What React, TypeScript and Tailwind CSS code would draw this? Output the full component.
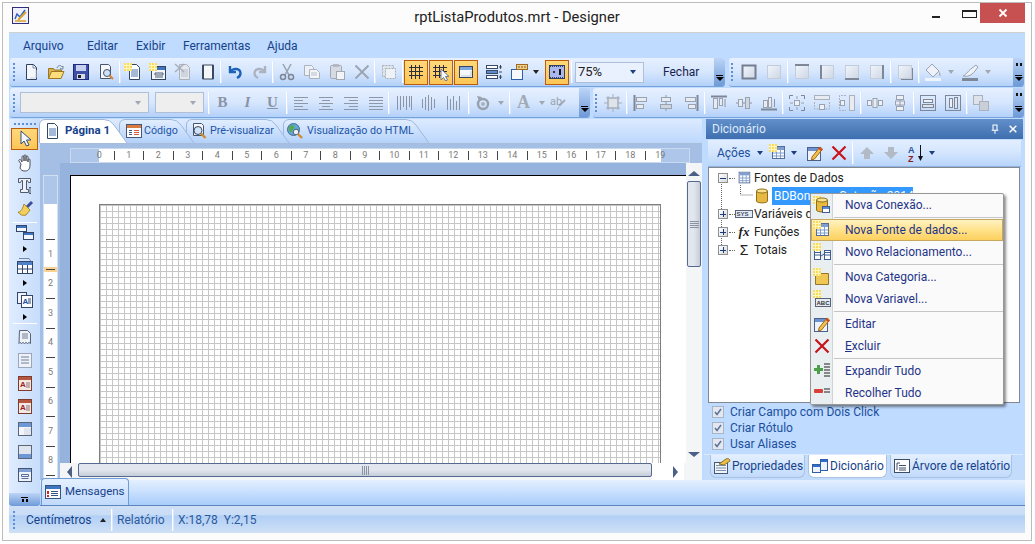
import React from "react";

const S = ({ children, s = 18 }: { children?: React.ReactNode; s?: number }) => (
  <svg width={s} height={s} viewBox="0 0 18 18" className="block shrink-0">{children}</svg>
);
const P = (d: string, c = "#8a94a6") => <S><path d={d} stroke={c} fill="none" /></S>;
const Star = ({ x = 0, y = 0 }: { x?: number; y?: number }) => (
  <g transform={`translate(${x} ${y})`}>
    <rect width="8" height="8" fill="#f8dc62" />
    <path d="M0 2.5h8M0 5.5h8M2.5 0v8M5.5 0v8" stroke="#fff6c0" />
  </g>
);
const Box = ({ t, r, b, l, all, shadow }: { t?: boolean; r?: boolean; b?: boolean; l?: boolean; all?: boolean; shadow?: boolean }) => (
  <S>
    <defs><linearGradient id="bx" x1="0" y1="0" x2="1" y2="1"><stop offset="0" stopColor="#f2f6fc" /><stop offset="1" stopColor="#cdd6e4" /></linearGradient></defs>
    {shadow && <path d="M5 17h12V5h-2v10H5z" fill="#7d8798" />}
    <rect x="2.5" y="2.5" width="13" height="13" fill="url(#bx)" stroke="#c3ccd9" />
    {all && <rect x="2.5" y="2.5" width="13" height="13" fill="none" stroke="#747e8f" strokeWidth="2" />}
    {t && <rect x="2" y="1" width="14" height="2" fill="#7d8798" />}
    {b && <rect x="2" y="15" width="14" height="2" fill="#7d8798" />}
    {l && <rect x="2" y="2" width="2" height="14" fill="#7d8798" />}
    {r && <rect x="14" y="2" width="2" height="14" fill="#7d8798" />}
  </S>
);
const Lines = ({ d = "M2 3.5h14M2 6.5h14M2 9.5h14M2 12.5h14M2 15.5h14" }: { d?: string }) => P(d, "#8d97a8");
const Page = ({ g }: { g?: boolean }) => (
  <>
    <path d="M5.5 1.5h7l3 3v12h-10z" fill={g ? "#e4e8ee" : "#fdfeff"} stroke={g ? "#a9b1be" : "#33465f"} />
    <path d="M7 7h7M7 9h7M7 11h7M7 13h7" stroke={g ? "#b9c0cb" : "#4a74b0"} />
  </>
);
const Sheet = ({ bot }: { bot?: boolean }) => (
  <S>
    <rect x="2.5" y="2.5" width="13" height="13" fill="#f4f6fa" stroke="#5b6678" />
    <path d={bot ? "M3 11h12v4H3z" : "M3 3h12v4H3z"} fill="#6d97d6" />
    <path d={bot ? "M3 3h12v8H3z" : "M8 8h7v7H8z"} fill="#dfe5ee" />
  </S>
);
const RedA = () => (
  <S>
    <rect x="2.5" y="2.5" width="13" height="14" fill="#f4e9e4" stroke="#7d3b2d" />
    <rect x="3" y="3" width="12" height="3" fill="#b5583f" />
    <text x="4" y="13" fontSize="8" fontWeight="700" fill="#a11d1d" fontFamily="Liberation Sans">A</text>
    <path d="M10 9h4M10 11h4M10 13h4" stroke="#8a7570" />
  </S>
);
const Folder = () => (
  <>
    <path d="M1.5 15.5v-10h5l1 1.5h7v2" fill="#d8b255" stroke="#9c7620" />
    <path d="M1.5 15.5l3-7h12.500l-3 7z" fill="#fbdd7c" stroke="#9c7620" />
  </>
);
const Cyl = () => (
  <S>
    <path d="M3.500 4v10c0 2.500 11 2.500 11 0V4" fill="#e7b93f" stroke="#8f6f1c" />
    <ellipse cx="9" cy="4" rx="5.500" ry="2" fill="#f8e28c" stroke="#8f6f1c" />
  </S>
);
const Tbl = () => (
  <>
    <rect x="3.500" y="2.500" width="12" height="12" fill="#fdfdff" stroke="#566d95" />
    <rect x="4" y="3" width="11" height="3" fill="#7e9fd0" />
    <path d="M4 9h11M4 12h11M7.500 6v8M11.500 6v8" stroke="#7e9fd0" />
  </>
);
const Pencil = () => (
  <S>
    <rect x="1.500" y="3.500" width="13" height="13" fill="#eef2fa" stroke="#4a5f8a" />
    <rect x="2" y="4" width="12" height="3" fill="#6c93cf" />
    <path d="M6 13L14 3l2.500 2L8.500 15l-3 1z" fill="#f4c24a" stroke="#a06a18" />
    <path d="M13 4l3 2.500" stroke="#d7402b" strokeWidth="2" />
  </S>
);
const RedX = () => <S><path d="M2.500 2.500l13 13M15.500 2.500l-13 13" stroke="#c8131b" strokeWidth="2.200" /></S>;

const ic: Record<string, React.ReactNode> = {
  newDoc: <S><path d="M4.500 1.500h7l3 3v12h-10z" fill="#f4f6fa" stroke="#2f4160" /><path d="M11 2v3h3" fill="none" stroke="#7b8aa1" /><path d="M8 15h6V7" stroke="#cbd3df" fill="none" /></S>,
  open: <S><Folder /><path d="M10 5c1-3 4-3 5-1l1-1v3h-3l1-1" stroke="#75859b" fill="none" /></S>,
  save: <S><rect x="1.500" y="1.500" width="15" height="15" fill="#3e4fa6" stroke="#1e2a7a" /><rect x="4" y="2" width="10" height="6" fill="#c6d0ef" /><rect x="5" y="11" width="8" height="5" fill="#d7dbe6" /><rect x="6" y="12" width="3" height="3" fill="#222" /></S>,
  prev: <S><path d="M3.500 1.500h8l2 2v12h-10z" fill="#f5f7fb" stroke="#45566f" /><circle cx="10" cy="10" r="3.500" fill="#cfe2f7" stroke="#44546b" /><path d="M12.500 12.500l3.500 3.500" stroke="#d9842b" strokeWidth="2" /></S>,
  newPage: <S><Page /><Star x={0} y={0} /></S>,
  newForm: <S><rect x="2.500" y="3.500" width="14" height="13" fill="#f4f6fb" stroke="#33465f" /><rect x="3" y="4" width="13" height="3" fill="#3f74c2" /><path d="M6 10h8v2H6zM6 14h8" stroke="#4a5a72" fill="none" /><Star /></S>,
  delPage: <S><Page g /><path d="M1 1l9 8M10 1l-9 8" stroke="#a6aeba" strokeWidth="1.500" /></S>,
  pageSz: <S><rect x="4" y="2" width="10" height="14" fill="#f4f6fa" stroke="#3c4a60" /><path d="M4 2v14M14 2v14" stroke="#3c4a60" strokeWidth="2" /></S>,
  undo: <S><path d="M4 3v6h6M4.500 9C7 4.500 14 5 14.500 10c.2 2.500-1.500 4-3.500 5" fill="none" stroke="#1e62b8" strokeWidth="2.400" /></S>,
  redo: <S><path d="M14 3v6H8M13.500 9C11 4.500 4 5 3.500 10c-.2 2.500 1.500 4 3.500 5" fill="none" stroke="#aab3bf" strokeWidth="2.400" /></S>,
  cut: <S><path d="M5 1l6 11M13 1L7 12" stroke="#98a1ae" strokeWidth="1.500" /><circle cx="5" cy="14" r="2.500" fill="none" stroke="#7d8696" strokeWidth="1.500" /><circle cx="13" cy="14" r="2.500" fill="none" stroke="#7d8696" strokeWidth="1.500" /></S>,
  copy: <S><path d="M1.500 2.500h7l2 2v8h-9z" fill="#eef1f5" stroke="#aab2bd" /><path d="M6.500 6.500h7l3 3v6h-10z" fill="#f2f4f8" stroke="#aab2bd" /><path d="M8 10h6M8 12h6" stroke="#b9c0ca" /></S>,
  paste: <S><rect x="2.500" y="2.500" width="11" height="13" rx="1" fill="#d6dbe3" stroke="#a0a8b4" /><rect x="5" y="1" width="6" height="3" fill="#b3bac5" /><rect x="8.500" y="8.500" width="8" height="8" fill="#f2f4f8" stroke="#a0a8b4" /></S>,
  xGray: <S><path d="M2.500 2.500l13 13M15.500 2.500l-13 13" stroke="#9aa3b0" strokeWidth="1.800" /></S>,
  select: <S><rect x="2.500" y="2.500" width="11" height="11" fill="#dfe4ea" stroke="#a9b1bd" strokeDasharray="2 1" /><rect x="5.500" y="5.500" width="10" height="10" fill="#eef1f5" stroke="#a9b1bd" strokeDasharray="2 1" /></S>,
  grid: P("M4.500 2v14M8.500 2v14M12.500 2v14M2 4.500h14M2 8.500h14M2 12.500h14", "#2c2c3a"),
  grid2: <S><path d="M3.500 2v13M7.500 2v13M11.500 2v9M1 4.500h14M1 8.500h14M1 12.500h8" stroke="#2c2c3a" fill="none" /><path d="M9 6v11l2.500-2.500 2 3.500 2-1-2-3.500H17z" fill="#f4f6fc" stroke="#6b7896" /></S>,
  win: <S><rect x="2.500" y="3.500" width="13" height="11" fill="#f4f7fc" stroke="#334560" /><rect x="3" y="4" width="12" height="3" fill="#7ea6e0" /><path d="M4 13h10V8" stroke="#c2cbd8" fill="none" /></S>,
  list: <S><rect x="1.500" y="2.500" width="11" height="3" fill="#fff" stroke="#3a4a63" /><rect x="1.500" y="7.500" width="11" height="3" fill="#5d8bd0" stroke="#3a4a63" /><rect x="1.500" y="12.500" width="11" height="3" fill="#fff" stroke="#3a4a63" /><path d="M14 4h3M14 9h3M14 14h3M15.500 2v4M15.500 12v4" stroke="#3a4a63" /></S>,
  winDrop: <S><rect x="1.500" y="6.500" width="11" height="10" fill="#f5f8fd" stroke="#2e5ea8" /><rect x="6.500" y="1.500" width="11" height="5" fill="#f2cf85" stroke="#9a6a24" /><path d="M8 4h8" stroke="#7a5a2a" strokeDasharray="2 1" /></S>,
  ruler: <S><rect x="1.500" y="2.500" width="15" height="13" fill="#aab8ef" stroke="#2f4160" /><path d="M2 3.500h14M2 14.500h14" stroke="#2f4160" strokeDasharray="1 1" /><rect x="11" y="6" width="2" height="6" fill="#111" /><rect x="5" y="8" width="2" height="2" fill="#333" /></S>,
  rotate: <S><circle cx="9" cy="10" r="5" fill="none" stroke="#98a1ae" strokeWidth="2.500" /><circle cx="9" cy="10" r="2" fill="#a9b1bd" /><path d="M3 2l5 1-3 4z" fill="#98a1ae" /></S>,
  ab: <S><path d="M11 12L17 6" stroke="#a5adba" strokeWidth="2" /><path d="M9 16l2-3" stroke="#a5adba" /></S>,
  alignL: Lines({ d: "M2 3.500h14M2 6.500h9M2 9.500h14M2 12.500h9M2 15.500h14" }),
  alignC: Lines({ d: "M2 3.500h14M5 6.500h8M2 9.500h14M5 12.500h8M2 15.500h14" }),
  alignR: Lines({ d: "M2 3.500h14M7 6.500h9M2 9.500h14M7 12.500h9M2 15.500h14" }),
  alignJ: Lines({}),
  bar1: P("M2.500 2v14M5.500 2v14M8.500 2v11M11.500 2v14M14.500 2v11M16.500 2v14"),
  bar2: P("M2.500 5v9M5.500 3v13M8.500 1v16M11.500 3v13M14.500 5v9"),
  bar3: P("M2.500 2v14M5.500 5v11M8.500 2v14M11.500 7v9M14.500 2v14"),
  fit: <S><rect x="4" y="4" width="10" height="10" fill="#dfe4ea" stroke="#a6aebb" /><path d="M9 0v4M9 14v4M0 9h4M14 9h4M2 4h14M2 14h14M4 2v14M14 2v14" stroke="#a6aebb" fill="none" /></S>,
  aL: <S><path d="M2.500 1v16" stroke="#7d8798" strokeWidth="2" /><rect x="4.500" y="3.500" width="10" height="4" fill="#e8ecf2" stroke="#98a2b1" /><rect x="4.500" y="10.500" width="7" height="4" fill="#e8ecf2" stroke="#98a2b1" /></S>,
  aC: <S><path d="M9 1v16" stroke="#8a94a6" /><rect x="4.500" y="3.500" width="9" height="4" fill="#e8ecf2" stroke="#98a2b1" /><rect x="3.500" y="10.500" width="11" height="4" fill="#cfd6e0" stroke="#98a2b1" /></S>,
  aR: <S><path d="M15.500 1v16" stroke="#7d8798" strokeWidth="2" /><rect x="3.500" y="3.500" width="10" height="4" fill="#e8ecf2" stroke="#98a2b1" /><rect x="6.500" y="10.500" width="7" height="4" fill="#e8ecf2" stroke="#98a2b1" /></S>,
  aT: <S><path d="M1 2.500h16" stroke="#7d8798" strokeWidth="2" /><rect x="3.500" y="4.500" width="4" height="10" fill="#e8ecf2" stroke="#98a2b1" /><rect x="9.500" y="4.500" width="3" height="7" fill="#e8ecf2" stroke="#98a2b1" /><path d="M15 13V5" stroke="#8a94a6" /></S>,
  aM: <S><path d="M1 9h16" stroke="#8a94a6" /><rect x="3.500" y="5.500" width="4" height="7" fill="#e8ecf2" stroke="#98a2b1" /><rect x="10.500" y="3.500" width="4" height="11" fill="#cfd6e0" stroke="#98a2b1" /></S>,
  aB: <S><path d="M1 15.500h16" stroke="#7d8798" strokeWidth="2" /><rect x="3.500" y="6.500" width="4" height="7" fill="#e8ecf2" stroke="#98a2b1" /><rect x="8.500" y="3.500" width="3" height="10" fill="#e8ecf2" stroke="#98a2b1" /><path d="M14.500 5v8" stroke="#8a94a6" /></S>,
  sz1: <S><path d="M1.500 5V1.500H5M13 1.500h3.500V5M1.500 13v3.500H5M13 16.500h3.500V13" stroke="#7d8798" fill="none" /><rect x="6.500" y="6.500" width="5" height="5" fill="#eef1f5" stroke="#98a2b1" /><path d="M9 2v3M9 13v3M2 9h3M13 9h3" stroke="#98a2b1" /></S>,
  sz2: <S><rect x="1.500" y="1.500" width="15" height="4" fill="#e8ecf2" stroke="#a9b1bd" /><path d="M1.500 8v7h15V8" stroke="#a9b1bd" strokeDasharray="2 1" fill="none" /><rect x="6.500" y="10.500" width="5" height="5" fill="#eef1f5" stroke="#98a2b1" /></S>,
  sz3: <S><rect x="11.500" y="1.500" width="5" height="15" fill="#e8ecf2" stroke="#a9b1bd" /><path d="M8 1.500H1.500v15H8" stroke="#a9b1bd" strokeDasharray="2 1" fill="none" /><rect x="2.500" y="6.500" width="4" height="5" fill="#eef1f5" stroke="#98a2b1" /></S>,
  dH: <S><rect x="1.500" y="6.500" width="4" height="5" fill="#eef1f5" stroke="#98a2b1" /><rect x="7" y="4.500" width="4" height="9" fill="#e8ecf2" stroke="#98a2b1" /><rect x="12.500" y="6.500" width="4" height="5" fill="#eef1f5" stroke="#98a2b1" /></S>,
  dV: <S><rect x="5.500" y="1.500" width="7" height="4" fill="#eef1f5" stroke="#98a2b1" /><rect x="4.500" y="7" width="9" height="4" fill="#e8ecf2" stroke="#98a2b1" /><rect x="5.500" y="12.500" width="7" height="4" fill="#eef1f5" stroke="#98a2b1" /><path d="M9 5v8" stroke="#98a2b1" /></S>,
  cH: <S><rect x="1.500" y="1.500" width="15" height="15" fill="none" stroke="#7d8798" /><rect x="4.500" y="5.500" width="9" height="3" fill="#eef1f5" stroke="#7d8798" /><rect x="3.500" y="10.500" width="11" height="3" fill="#dfe4ea" stroke="#7d8798" /></S>,
  cV: <S><rect x="1.500" y="1.500" width="15" height="15" fill="none" stroke="#7d8798" /><rect x="5.500" y="4.500" width="3" height="9" fill="#eef1f5" stroke="#7d8798" /><rect x="10.500" y="3.500" width="3" height="11" fill="#dfe4ea" stroke="#7d8798" /></S>,
  order: <S><rect x="1.500" y="1.500" width="9" height="9" fill="#dfe3e9" stroke="#a9b1bd" /><rect x="7.500" y="7.500" width="9" height="9" fill="#c9cfd8" stroke="#a9b1bd" /></S>,
  paint: <S><path d="M8 1l7 7-6 6-7-7z" fill="#eef1f5" stroke="#9aa3b0" /><path d="M15 8c2 3 2 5 1 5s-1-2-1-5z" fill="#a9b1bd" /><rect x="1" y="15" width="16" height="3" fill="#eef4fd" /></S>,
  pen: <S><path d="M2 13c3-1 4-4 9-8l4-3 2 2-3 4c-4 5-8 6-12 5z" fill="#eef1f5" stroke="#9aa3b0" /><rect x="1" y="15" width="16" height="3" fill="#7d8798" /></S>,
  pointer: <S><path d="M5 1v13l3-3 2.500 5 2.500-1-2.500-5H15z" fill="#f4f7fc" stroke="#364e7a" /></S>,
  hand: <S><path d="M5 10L3 7c-1-1 1-2 2-1l1 2V3c0-1.500 2-1.500 2 0v4-5c0-1.500 2-1.500 2 0v5-4c0-1.500 2-1.500 2 0v5-2c0-1.500 2-1.500 2 0v5c0 3-1 6-5 6-3 0-4-1-5-3z" fill="#fff" stroke="#4a4f5a" /></S>,
  textT: <S><path d="M2.500 1.500h12v4h-2l-1-2h-1v9h2v3h-8v-3h2v-9h-1l-1 2h-2z" fill="#eef2f8" stroke="#4e5a6b" /><path d="M14 11v5M13 10.500h2M13 16.500h2" stroke="#4e5a6b" /></S>,
  brush: <S><path d="M11 7l5-5" stroke="#3f4f96" strokeWidth="3" /><path d="M8 4l6 6-4 5c-3 1-6 0-8-3 2 0 4-1 6-8z" fill="#f2cf5c" stroke="#a68a2c" /></S>,
  bands: <S><rect x="0.500" y="2.500" width="10" height="6" fill="#f4f7fc" stroke="#33456a" /><rect x="1" y="3" width="9" height="2" fill="#3f74c2" /><rect x="7.500" y="9.500" width="10" height="7" fill="#f4f7fc" stroke="#33456a" /><rect x="8" y="10" width="9" height="2" fill="#3f74c2" /></S>,
  table: <S><rect x="1.500" y="4.500" width="15" height="12" fill="#fbfdff" stroke="#33456a" /><rect x="2" y="5" width="14" height="3" fill="#4f80c8" /><path d="M2 12h14M6.500 8v8M11.500 8v8" stroke="#33456a" /><path d="M3 1.500h10l2 3" stroke="#6e86ad" fill="none" /></S>,
  docA: <S><rect x="1.500" y="1.500" width="9" height="11" fill="#eef2fa" stroke="#33456a" /><rect x="5.500" y="4.500" width="11" height="12" fill="#fbfcff" stroke="#33456a" /><text x="6.500" y="13" fontSize="8" fontWeight="700" fill="#1e4fa8" fontFamily="Liberation Sans">A</text><path d="M12 8h3M12 10h3M12 12h3" stroke="#33456a" /></S>,
  zig: <S><path d="M3.500 2.500h8l3 3v10l-1.500-1-1.500 1-1.500-1-1.500 1-1.500-1-1.500 1-1.500-1-1 1z" fill="#eef1f6" stroke="#56627a" /><path d="M6 6h6M6 8h6M6 10h6" stroke="#6f809a" /></S>,
  zig2: <S><rect x="2.500" y="2.500" width="13" height="14" fill="#eef1f7" stroke="#56627a" strokeDasharray="1 1" /><path d="M5 6h8M5 9h8M5 12h8" stroke="#6f809a" /></S>,
  redA: <RedA />,
  sheetT: <Sheet />,
  sheetB: <Sheet bot />,
  form: <S><rect x="2.500" y="2.500" width="13" height="13" fill="#eef2fa" stroke="#45556f" /><rect x="3" y="3" width="12" height="3" fill="#7ea0d4" /><path d="M5.500 8.500h7v2h-7zM5.500 12.500h7" stroke="#5a6f96" fill="none" /></S>,
  msg: <S><rect x="1.500" y="2.500" width="15" height="13" fill="#fdfdff" stroke="#33557f" /><rect x="2" y="3" width="14" height="3" fill="#3f74c2" /><path d="M7 8.500h7M7 10.500h7M7 12.500h7" stroke="#33557f" /><path d="M4 8v3" stroke="#d8261d" strokeWidth="2" /><path d="M4 12v2" stroke="#d8261d" strokeWidth="2" /></S>,
  codeT: <S><rect x="1.500" y="2.500" width="15" height="13" fill="#fdfdff" stroke="#45587a" /><rect x="2" y="3" width="14" height="3" fill="#d97a3f" /><path d="M4 8.500h3M4 10.500h3M4 12.500h3" stroke="#45587a" /><path d="M9 8.500h5M9 10.500h5M9 12.500h5" stroke="#d15b3b" /></S>,
  pageT: <S><Page /></S>,
  preview: <S><path d="M3.500 1.500h8l2 2v10h-10z" fill="#f5f7fb" stroke="#45566f" /><circle cx="8" cy="8.500" r="4" fill="#cfe2f7" stroke="#3c4b60" /><path d="M11 11.500l4.500 4.500" stroke="#d28a2e" strokeWidth="2.400" /></S>,
  globe: <S><circle cx="7.500" cy="7.500" r="6" fill="#5da9d8" stroke="#476a8c" /><path d="M3 5c2-2 4-3 5-1s-1 3-2 5-2 1-3-1zM9 9c2-1 4 0 3 2l-2 1z" fill="#57ab4a" /><circle cx="10" cy="10" r="2.800" fill="#e9f2fb" stroke="#53606f" /><path d="M12 12l4 4" stroke="#d28a2e" strokeWidth="2.400" /></S>,
  actNew: <S><Tbl /><Star /></S>,
  dn: <S><path d="M6 3h6v5h4l-7 7-7-7h4z" fill="#b2bac6" /></S>,
  up: <S><path d="M6 15h6v-5h4L9 3l-7 7h4z" fill="#b2bac6" /></S>,
  az: <S><text x="1" y="8.500" fontSize="9" fontWeight="700" fill="#2a4f9c" fontFamily="Liberation Sans">A</text><text x="1" y="17.500" fontSize="9" fontWeight="700" fill="#8a1c1c" fontFamily="Liberation Sans">Z</text><path d="M13.500 1v12" stroke="#111" /><path d="M11 12h5l-2.500 5z" fill="#111" /></S>,
  pencil: <Pencil />,
  redX: <RedX />,
  pin: <S s={12}><path d="M6 3h6v8h-6zM4 11h10M9 11v5" stroke="#fff" fill="none" strokeWidth="1.600" /></S>,
  close: <S s={12}><path d="M4 4l10 10M14 4L4 14" stroke="#fff" strokeWidth="2.200" /></S>,
  tblI: <S s={16}><Tbl /></S>,
  cyl: <Cyl />,
  sys: <S><rect x="0.500" y="5.500" width="17" height="7" fill="#e6ebf3" stroke="#59647a" /><text x="1.500" y="11" fontSize="6" fontWeight="700" fill="#3e4c66" fontFamily="Liberation Sans">SYS</text></S>,
  mConn: <S><Star /><Cyl /><rect x="9.500" y="10.500" width="7" height="6" fill="#fff" stroke="#3f5c8e" /><rect x="10" y="11" width="6" height="2" fill="#5d8bd0" /></S>,
  mFonte: <S><Tbl /><Star /></S>,
  mRel: <S><rect x="1.500" y="7.500" width="6" height="9" fill="#fff" stroke="#3f5c8e" /><rect x="11.500" y="7.500" width="6" height="9" fill="#fff" stroke="#3f5c8e" /><path d="M2 9.500h5M12 9.500h5M2 12h5M12 12h5M8 13l3-2" stroke="#3f5c8e" /><Star /></S>,
  mCat: <S><path d="M2.500 16.500v-11h13v11z" fill="#efc754" stroke="#97762a" /><path d="M2.500 5.500h6" stroke="#97762a" /><Star /></S>,
  mVar: <S><rect x="2.500" y="8.500" width="15" height="8" fill="#e6ebf3" stroke="#59647a" /><text x="3.500" y="15" fontSize="6" fontWeight="700" fill="#333" fontFamily="Liberation Sans">ABC</text><Star /></S>,
  mExp: <S><path d="M1 6h3V3h3v3h3v3H7v3H4V9H1z" fill="#4ca04a" /><path d="M11 2h6M11 5h6M11 8h6M11 11h6M11 14h6" stroke="#222" /></S>,
  mCol: <S><rect x="1" y="5" width="9" height="4" rx="1" fill="#d9403a" /><path d="M11 5h6M11 8h6" stroke="#222" /></S>,
  prop: <S><rect x="1.500" y="5.500" width="13" height="11" fill="#f1f4f9" stroke="#47597a" /><path d="M3 8.500h10M3 11h10M3 13.500h10" stroke="#7b8eaa" /><path d="M6 7L13 2c2-1 4 0 4 2l-6 4z" fill="#eac04a" stroke="#8f7226" /></S>,
  dict: <S><rect x="1.500" y="7.500" width="8" height="8" fill="#eef4fd" stroke="#2f5ea8" /><rect x="2" y="8" width="7" height="2" fill="#2f6fc7" /><rect x="9.500" y="2.500" width="7" height="11" fill="#eef4fd" stroke="#2f5ea8" /><rect x="10" y="3" width="6" height="2" fill="#2f6fc7" /></S>,
  tree: <S><rect x="1.500" y="2.500" width="15" height="13" fill="#fdfdff" stroke="#3e4e66" /><path d="M4 6h3M6 8.500h7M6 11h7M6 13h7M4 6v7" stroke="#3e4e66" /></S>,
};

const Btn = ({ i, active, className = "" }: { i: string; active?: boolean; className?: string }) => (
  <div className={`w-[25px] h-[25px] shrink-0 flex items-center justify-center ${className}`}>
    {active ? (
      <div className="w-[24px] h-[25px] -ml-px flex items-center justify-center border border-[#bd5b0c] bg-gradient-to-b from-[#ffd87a] to-[#fdc655]">{ic[i]}</div>
    ) : ic[i]}
  </div>
);
const Tx = ({ c, className = "" }: { c: string; className?: string }) => (
  <div className={`w-[25px] h-[25px] shrink-0 flex items-center justify-center font-['Liberation_Serif',serif] font-bold text-[15px] text-[#8a94a6] ${className}`}>{c}</div>
);
const Sep = ({ className = "" }: { className?: string }) => <div className={`w-[2px] h-[22px] shrink-0 border-l border-white bg-[#dbe8fb] ${className}`} />;
const Arrow = ({ className = "", c = "border-t-[#a0a8b4]" }: { className?: string; c?: string }) => (
  <div className={`w-[12px] shrink-0 flex justify-center ${className}`}>
    <div className={`w-0 h-0 border-x-[3.5px] border-x-transparent border-t-[4px] ${c}`} />
  </div>
);
const Grip = ({ className = "" }: { className?: string }) => (
  <div className={`flex flex-col gap-[2px] shrink-0 ${className}`}>
    {[0, 1, 2, 3, 4].map((k) => <div key={k} className="w-[2px] h-[2px] bg-[#5c8fd6]" />)}
  </div>
);
const Chevron = ({ dbl }: { dbl?: boolean }) => (
  <div className="ml-auto w-[11px] self-stretch shrink-0 rounded-r-[3px] bg-gradient-to-b from-[#bcd4f6] to-[#6e9ad8] flex flex-col items-center justify-end pb-[5px]">
    {dbl && <div className="mb-auto mt-[5px] text-[0px] flex gap-[2px]"><div className="w-[2px] h-[3px] bg-[#111]" /><div className="w-[2px] h-[3px] bg-[#111]" /></div>}
    <div className="w-[7px] h-[1px] bg-black mb-[1px]" />
    <div className="w-0 h-0 border-x-[4px] border-x-transparent border-t-[4px] border-t-black" />
  </div>
);
const Bar = ({ children, className = "" }: { children: React.ReactNode; className?: string }) => (
  <div className={`flex items-center rounded-[3px] bg-gradient-to-b from-[#e6f0ff] via-[#d6e6fd] to-[#b4d1fa] border-b border-[#74a2db] ${className}`}>{children}</div>
);
const Combo = ({ className = "", text }: { className?: string; text?: string }) => (
  <div className={`h-[21px] shrink-0 border border-[#aebfd6] flex items-center justify-end pr-[7px] ${className}`}>
    {text && <span className="mr-auto ml-[2px] text-[13px] text-[#222]">{text}</span>}
    <div className={`w-0 h-0 border-x-[3.5px] border-x-transparent border-t-[4px] ${text ? "border-t-[#1c3f80]" : "border-t-[#a0a8b4]"}`} />
  </div>
);

const Tab = ({ w, cls, icon, label, active, tcls = "" }: { w: number; cls: string; icon: string; label: string; active?: boolean; tcls?: string }) => (
  <div className={`relative h-[24px] flex items-center shrink-0 ${cls}`}>
    <svg className="absolute inset-0" width={w} height={24} viewBox={`0 0 ${w} 24`}>
      <defs>
        <linearGradient id="tg" x1="0" y1="0" x2="0" y2="1"><stop offset="0" stopColor="#e2eeff" /><stop offset="1" stopColor="#b4d1fa" /></linearGradient>
      </defs>
      <path d={`M0.500 24V6Q0.500 1 6 0.500H${w - 24}Q${w - 18} 0.500 ${w - 14} 6L${w - 1} 24`} fill={active ? "#ffffff" : "url(#tg)"} stroke="#9db8dc" />
    </svg>
    <div className="relative flex items-center pl-[3px]">
      {ic[icon]}
      <span className={`whitespace-nowrap ${tcls} ${active ? "text-[11.500px] font-bold text-[#15428b]" : "text-[10.700px] text-[#1b55a8]"}`}>{label}</span>
    </div>
  </div>
);

const HCell = ({ n }: { n: number }) => (
  <div className="w-[29.500px] shrink-0 flex items-center">
    <span className="flex-1 text-center text-[9px] leading-none text-[#7a7a7a]">{n}</span>
    {n < 19 && <div className="w-[1px] h-[9px] bg-[#444]" />}
  </div>
);
const VCell = ({ n }: { n: number }) => (
  <div className="relative h-[29.500px] shrink-0 flex flex-col items-center">
    {n === 2 && <div className="absolute left-0 right-0 top-[-2px] h-[5px] bg-[#fbd28f]" />}
    <div className="relative w-[9px] h-[1px] bg-[#444] shrink-0" />
    <span className="flex-1 flex items-center text-[9px] leading-none text-[#7a7a7a]">{n}</span>
  </div>
);

const Check = ({ label }: { label: string }) => (
  <div className="h-[16px] flex items-center pl-[6px] text-[12px] text-[#1b4f9c]">
    <div className="w-[12px] h-[12px] border border-[#a6b5c9] bg-[#e3e8ee] flex items-center justify-center mr-[6px]">
      <svg width="10" height="10" viewBox="0 0 10 10"><path d="M2 5l2 2.500L8 2" stroke="#5d7199" strokeWidth="1.500" fill="none" /></svg>
    </div>
    {label}
  </div>
);
const Exp = ({ minus }: { minus?: boolean }) => (
  <div className="relative w-[10px] h-[10px] shrink-0 border border-[#8e8f8f] bg-gradient-to-br from-white to-[#d5d9df] flex items-center justify-center">
    <div className="w-[6px] h-[1px] bg-[#1c3d78]" />
    {!minus && <div className="absolute w-[1px] h-[6px] bg-[#1c3d78]" />}
  </div>
);
const TreeRow = ({ icon, label, minus }: { icon: React.ReactNode; label: string; minus?: boolean }) => (
  <div className="h-[18px] flex items-center pl-[9px]">
    <Exp minus={minus} />
    <div className="w-[6px] ml-px border-t border-dotted border-[#666] mr-px" />
    <div className="w-[16px] flex justify-center">{icon}</div>
    <span className="ml-[2px] text-[12px] text-[#222] whitespace-nowrap">{label}</span>
  </div>
);

const MItem = ({ icon, children, hi }: { icon: string; children: React.ReactNode; hi?: boolean }) => (
  <div className={`relative h-[22px] flex items-center ${hi ? "bg-gradient-to-b from-[#fff4c6] via-[#ffe28a] to-[#fccf58] outline outline-1 outline-[#c8a85e] -outline-offset-1" : ""}`}>
    <div className={`w-[22px] h-full shrink-0 flex items-center justify-center ${hi ? "" : "bg-[#e9eef0] border-r border-[#cdd3d7]"}`}>{ic[icon]}</div>
    <span className="pl-[12px] text-[12px] text-[#1f3488] whitespace-nowrap">{children}</span>
  </div>
);
const MSep = () => (
  <div className="h-[3px] flex">
    <div className="w-[22px] bg-[#e9eef0] border-r border-[#cdd3d7]" />
    <div className="flex-1 ml-px mt-px h-[1px] bg-[#c5c5c5]" />
  </div>
);
const BTab = ({ icon, label, cls, active }: { icon: string; label: string; cls: string; active?: boolean }) => (
  <div className={`h-[23px] flex items-center gap-[1px] pl-[2px] rounded-b-[6px] border border-t-0 border-[#a9c2e4] text-[12px] text-[#15428b] whitespace-nowrap ${active ? "bg-white" : "bg-gradient-to-b from-[#e3efff] to-[#c2dafb]"} ${cls}`}>
    {ic[icon]}
    {label}
  </div>
);

export default function App() {
  return (
    <div className="relative w-[1035px] h-[544px] overflow-hidden bg-white font-['Roboto','Open_Sans',sans-serif]">
      <div className="ml-[2px] mt-[2px] w-[1030px] h-[539px] border border-[#bcbcbc] bg-[#fcfcfc] flex flex-col">
        {/* title bar */}
        <div className="h-[29px] shrink-0 grid grid-cols-[1fr_auto_1fr]">
          <div className="pl-[9px] pt-[4px]">
            <svg width="17" height="17" viewBox="0 0 17 17" className="block">
              <rect x="0.500" y="0.500" width="16" height="16" fill="#eef0fb" stroke="#2f2f7a" />
              <path d="M3 12l2-5 3 3 5-7" stroke="#2f5fc0" fill="none" strokeWidth="1.500" />
              <path d="M6 13L14 5" stroke="#d9a32b" strokeWidth="2" />
              <path d="M3 14h11" stroke="#d9a32b" strokeWidth="1.500" />
            </svg>
          </div>
          <div className="pt-[3px] text-[14.700px] leading-[22px] text-[#222]">rptListaProdutos.mrt - Designer</div>
          <div className="flex justify-end pr-[6px]">
            <div className="w-[8px] h-[2px] bg-[#222] mt-[13px] mr-[22px]" />
            <div className="w-[15px] h-[8px] border border-t-2 border-[#222] mt-[7px] mr-[3px]" />
            <div className="w-[45px] h-[20px] bg-[#c75050] flex items-center justify-center">
              <svg width="10" height="10" viewBox="0 0 10 10"><path d="M1.500 1.500l7 7M8.500 1.500l-7 7" stroke="#fff" strokeWidth="1.800" /></svg>
            </div>
          </div>
        </div>

        {/* client */}
        <div className="ml-[6px] mr-[6px] mb-[7px] flex-1 flex flex-col bg-[#bfdbff] border-t border-[#cfcfcf] min-h-0">
          {/* menu */}
          <div className="h-[25px] shrink-0 flex items-center pl-[14px] text-[12px] text-[#15428b]">
            <span className="w-[64px]">Arquivo</span><span className="w-[49px]">Editar</span><span className="w-[47px]">Exibir</span><span className="w-[84px]">Ferramentas</span><span>Ajuda</span>
          </div>
          {/* toolbar row 1 */}
          <div className="h-[30px] shrink-0 flex pl-[1px] pr-[1px] pb-[1px]">
            <Bar className="w-[715px] pl-[3px]">
              <Grip className="mr-[3px]" />
              <Btn i="newDoc" /><Btn i="open" /><Btn i="save" /><Btn i="prev" />
              <Sep className="ml-[1px] -mr-[1px]" />
              <Btn i="newPage" /><Btn i="newForm" /><Btn i="delPage" /><Btn i="pageSz" />
              <Sep />
              <Btn i="undo" /><Btn i="redo" />
              <Sep />
              <Btn i="cut" /><Btn i="copy" /><Btn i="paste" /><Btn i="xGray" />
              <Sep />
              <Btn i="select" />
              <Sep className="ml-[1px]" />
              <Btn i="grid" active /><Btn i="grid2" active /><Btn i="win" active />
              <Btn i="list" className="ml-[2px]" />
              <Btn i="winDrop" />
              <Arrow c="border-t-[#222]" className="-ml-[1px] w-[9px]" />
              <Btn i="ruler" active className="ml-[3px]" />
              <Sep className="ml-[1px]" />
              <Combo text="75%" className="ml-[2px] w-[69px] bg-[#e9f1fe]" />
              <span className="ml-[19px] text-[12px] text-[#1b1f4e]">Fechar</span>
              <Chevron />
            </Bar>
            <Bar className="flex-1 ml-[4px] pl-[2px]">
              <Grip className="mr-[3px]" />
              <div className="w-[25px] flex justify-center"><Box all /></div>
              <div className="w-[25px] flex justify-center"><Box /></div>
              <Sep className="ml-[1px]" />
              <div className="w-[25px] flex justify-center"><Box t /></div>
              <div className="w-[25px] flex justify-center"><Box l /></div>
              <div className="w-[25px] flex justify-center"><Box b /></div>
              <div className="w-[25px] flex justify-center"><Box r /></div>
              <Sep className="ml-[1px]" />
              <div className="w-[25px] flex justify-center"><Box shadow /></div>
              <Sep className="ml-[1px]" />
              <Btn i="paint" /><Arrow />
              <Btn i="pen" /><Arrow />
              <Chevron dbl />
            </Bar>
          </div>
          {/* toolbar row 2 */}
          <div className="h-[31px] shrink-0 flex pl-[1px] pr-[1px] pb-[1px]">
            <Bar className="w-[580px] pl-[3px]">
              <Grip className="mr-[5px]" />
              <Combo className="w-[129px] bg-[#eeeeee]" />
              <Combo className="ml-[6px] w-[49px] bg-[#eeeeee]" />
              <Sep className="ml-[4px]" />
              <Tx c="B" /><Tx c="I" className="italic" /><Tx c="U" className="underline" />
              <Sep className="ml-[1px]" />
              <Btn i="alignL" /><Btn i="alignC" /><Btn i="alignR" /><Btn i="alignJ" />
              <Sep />
              <Btn i="bar1" className="ml-[1px]" /><Btn i="bar2" /><Btn i="bar3" />
              <Sep className="ml-[2px]" />
              <Btn i="rotate" /><Arrow />
              <Sep className="ml-[2px]" />
              <Tx c="A" className="text-[18px] text-[#a2aab6]" /><Arrow />
              <div className="relative w-[25px] h-[18px] flex items-center text-[11px] leading-none text-[#9aa3b0]">
                <span className="absolute left-[2px] top-[2px]">ab</span>
                {ic.ab}
              </div>
              <Chevron />
            </Bar>
            <Bar className="flex-1 ml-[3px] pl-[2px]">
              <Grip className="mr-[3px]" />
              <Btn i="fit" />
              <Sep className="ml-[1px]" />
              <Btn i="aL" /><Btn i="aC" /><Btn i="aR" />
              <Sep className="ml-[1px]" />
              <Btn i="aT" /><Btn i="aM" /><Btn i="aB" />
              <Sep className="ml-[1px]" />
              <Btn i="sz1" /><Btn i="sz2" /><Btn i="sz3" />
              <Sep className="ml-[1px]" />
              <Btn i="dH" /><Btn i="dV" />
              <Sep className="ml-[1px]" />
              <Btn i="cH" /><Btn i="cV" />
              <Sep className="ml-[1px]" />
              <Btn i="order" />
              <Chevron dbl />
            </Bar>
          </div>

          {/* main */}
          <div className="flex-1 flex min-h-0">
            {/* left strip */}
            <div className="w-[31px] shrink-0 flex flex-col items-center bg-gradient-to-r from-[#dfecff] to-[#c7ddfb]">
              <div className="h-[9px] w-full flex items-center justify-center gap-[2px] shrink-0">
                {[0, 1, 2, 3, 4, 5].map((k) => <div key={k} className="w-[2px] h-[2px] bg-[#5c8fd6]" />)}
              </div>
              <div className="w-[27px] h-[22px] shrink-0 border border-[#bd5b0c] bg-gradient-to-b from-[#ffd87a] to-[#fdc655] flex items-center justify-center">{ic.pointer}</div>
              <div className="mt-[1px] h-[23px] flex items-center">{ic.hand}</div>
              <div className="h-[23px] flex items-center">{ic.textT}</div>
              <div className="h-[23px] flex items-center">{ic.brush}</div>
              <div className="w-[24px] h-[1px] bg-white mt-[2px]" />
              {["bands", "table", "docA"].map((k) => (
                <React.Fragment key={k}>
                  <div className="h-[18px] flex items-center">{ic[k]}</div>
                  <div className="h-[16px] flex items-center"><div className="w-0 h-0 border-y-[3.500px] border-y-transparent border-l-[4px] border-l-black" /></div>
                </React.Fragment>
              ))}
              <div className="w-[24px] h-[1px] bg-white -mt-[2px] mb-[1px]" />
              {["zig", "zig2", "redA", "redA", "sheetT", "sheetB", "form"].map((k, n) => (
                <div key={n} className="h-[23px] flex items-center">{ic[k]}</div>
              ))}
              <div className="mt-auto w-full h-[13px] rounded-b-[3px] bg-gradient-to-b from-[#bcd4f6] to-[#6e9ad8] flex flex-col items-center justify-center gap-[1px]">
                <div className="w-[7px] h-[1px] bg-black" />
                <div className="flex gap-[2px]"><div className="w-[2px] h-[3px] bg-black" /><div className="w-[2px] h-[3px] bg-black" /></div>
              </div>
            </div>

            <div className="flex-1 flex flex-col min-w-0">
              <div className="h-[361px] shrink-0 flex">
                {/* center */}
                <div className="w-[662px] shrink-0 flex flex-col">
                  <div className="h-[25px] shrink-0 flex items-end bg-gradient-to-b from-[#dceafe] to-[#bdd8fd] border-b border-[#a6bddc]">
                    <Tab w={89} cls="w-[89px] -ml-px z-40" icon="pageT" label="Página 1" active tcls="ml-[5px]" />
                    <Tab w={76} cls="w-[76px] -ml-[9px] pl-[3px] z-30" icon="codeT" label="Código" tcls="ml-[1px]" />
                    <Tab w={104} cls="w-[104px] -ml-[9px] z-20 pl-[1px]" icon="preview" label="Pré-visualizar" tcls="ml-[2px]" />
                    <Tab w={147} cls="w-[147px] -ml-[7px] z-10" icon="globe" label="Visualização do HTML" tcls="ml-[3px]" />
                  </div>
                  <div className="flex-1 flex flex-col bg-[#a4bee4] min-h-0">
                    <div className="h-[19px] shrink-0 pt-[4px] pl-[30px]">
                      <div className="w-[620px] h-[15px] border border-[#c9d9f0] flex overflow-hidden bg-[linear-gradient(90deg,#adc6ea_28px,#ffffff_28px,#ffffff_590px,#adc6ea_590px)] pl-[14px]">
                        {Array.from({ length: 20 }, (_, n) => <HCell key={n} n={n} />)}
                      </div>
                    </div>
                    <div className="flex-1 flex min-h-0">
                      <div className="w-[20px] shrink-0 pl-[3px] pt-[12px] flex">
                        <div className="w-[15px] border border-b-0 border-[#d2e0f4] overflow-hidden flex flex-col bg-[linear-gradient(180deg,#adc6ea_28px,#ffffff_28px)]">
                          <div className="h-[63px] shrink-0" />
                          {[1, 2, 3, 4, 5, 6, 7, 8, 9].map((n) => <VCell key={n} n={n} />)}
                        </div>
                      </div>
                      <div className="flex-1 flex flex-col min-w-0">
                        <div className="h-[300px] shrink-0 flex">
                          <div className="w-[626px] shrink-0 bg-[#95b3dd] pt-[12px] pl-[10px] flex overflow-hidden">
                            <div className="flex-1 bg-white border-l border-t border-black pl-[28px] pt-[28px] flex">
                              <div className="w-[562px] border border-b-0 border-[#7f7f7f] bg-white bg-[linear-gradient(#c6c6c6_1px,transparent_1px),linear-gradient(90deg,#c6c6c6_1px,transparent_1px)] bg-[size:6px_6px]" />
                            </div>
                          </div>
                          {/* v scrollbar */}
                          <div className="w-[16px] shrink-0 bg-[#f4f5f7] flex flex-col items-center pt-[2px]">
                            <div className="h-[16px] flex items-center"><div className="w-0 h-0 border-x-[6px] border-x-transparent border-b-[5px] border-b-[#4c5f86]" /></div>
                            <div className="w-[14px] h-[86px] rounded-[2px] border border-[#56698f] bg-gradient-to-r from-[#e2e6ee] via-[#e2e6ee] to-[#c5cdd9] flex flex-col items-center justify-center gap-[1px] shrink-0">
                              <div className="w-[9px] h-[1px] bg-[#8a93a3]" /><div className="w-[9px] h-[1px] bg-[#8a93a3]" /><div className="w-[9px] h-[1px] bg-[#8a93a3]" /><div className="w-[9px] h-[1px] bg-[#8a93a3]" />
                            </div>
                            <div className="mt-auto mb-[6px] w-0 h-0 border-x-[6px] border-x-transparent border-t-[5px] border-t-[#4c5f86]" />
                          </div>
                        </div>
                        {/* h scrollbar */}
                        <div className="flex-1 flex items-stretch bg-[#f4f5f7]">
                          <div className="w-[18px] shrink-0 flex items-center justify-center"><div className="w-0 h-0 border-y-[6px] border-y-transparent border-r-[5px] border-r-[#4c5f86]" /></div>
                          <div className="w-[574px] h-[14px] rounded-[2px] border border-[#56698f] bg-gradient-to-b from-[#e2e6ee] via-[#e2e6ee] to-[#c5cdd9] flex items-center justify-center gap-[1px] shrink-0">
                            <div className="w-[1px] h-[9px] bg-[#8a93a3]" /><div className="w-[1px] h-[9px] bg-[#8a93a3]" /><div className="w-[1px] h-[9px] bg-[#8a93a3]" /><div className="w-[1px] h-[9px] bg-[#8a93a3]" />
                          </div>
                          <div className="w-[32px] shrink-0 bg-white flex items-center justify-center pl-[14px]"><div className="w-0 h-0 border-y-[6px] border-y-transparent border-l-[5px] border-l-[#4c5f86]" /></div>
                        </div>
                      </div>
                    </div>
                  </div>
                </div>

                {/* right panel */}
                <div className="flex-1 flex flex-col pl-[4px] pr-[2px] min-w-0">
                  <div className="h-[20px] shrink-0 flex items-center pl-[6px] pr-[4px] bg-gradient-to-b from-[#628fca] to-[#3e6fae] text-[12px] text-[#dfeafa]">
                    <span>Dicionário</span>
                    <div className="ml-auto mr-[6px]">{ic.pin}</div>
                    {ic.close}
                  </div>
                  <div className="mx-[2px] mt-[1px] h-[27px] shrink-0 flex items-center pl-[9px] bg-gradient-to-b from-[#e2eeff] via-[#d3e5fd] to-[#b8d5fb] border-b border-[#8fb2df]">
                    <span className="text-[12px] text-[#1b4f9c] w-[32px]">Ações</span>
                    <Arrow c="border-t-[#1c3f80]" className="ml-[5px]" />
                    <Btn i="actNew" className="w-[24px] -ml-[1px]" />
                    <Arrow c="border-t-[#1c3f80]" className="-ml-[2px]" />
                    <Btn i="pencil" className="ml-[2px]" />
                    <Btn i="redX" className="-ml-[1px]" />
                    <Sep className="ml-[1px]" />
                    <Btn i="up" /><Btn i="dn" className="-ml-[1px]" />
                    <Btn i="az" />
                    <Arrow c="border-t-[#1c3f80]" className="-ml-[2px]" />
                  </div>
                  <div className="relative mx-[2px] mr-[3px] h-[236px] shrink-0 bg-white border border-[#828790] pt-[1px]">
                    <svg className="absolute left-[12px] top-[16px]" width="40" height="74" viewBox="0 0 40 74">
                      <path d="M0.500 0V66" stroke="#666" strokeDasharray="1 1" fill="none" />
                      <path d="M19.500 1V11H32" stroke="#666" strokeDasharray="1 1" fill="none" />
                    </svg>
                    <TreeRow minus icon={ic.tblI} label="Fontes de Dados" />
                    <div className="h-[18px] flex items-center pl-[44px]">
                      {ic.cyl}
                      <div className="ml-[1px] w-[141px] h-[18px] bg-[#3399ff] text-white text-[12px] pl-[2px] leading-[18px] overflow-hidden whitespace-nowrap">BDBonanza Cotação 2014</div>
                    </div>
                    <TreeRow icon={ic.sys} label="Variáveis de" />
                    <TreeRow icon={<span className="font-['Liberation_Serif',serif] italic font-bold text-[13px] text-[#222]">fx</span>} label="Funções" />
                    <TreeRow icon={<span className="font-['Liberation_Sans',sans-serif] text-[14px] text-[#222]">Σ</span>} label="Totais" />
                  </div>
                  <div className="shrink-0 mt-[1px]">
                    <Check label="Criar Campo com Dois Click" />
                    <Check label="Criar Rótulo" />
                    <Check label="Usar Aliases" />
                  </div>
                  <div className="mt-[2px] -ml-[2px] flex-1 border-t border-[#dcebff] pl-[6px] flex gap-[3px] bg-[#c4dcfc]">
                    <BTab icon="prop" label="Propriedades" cls="w-[95px]" />
                    <BTab icon="dict" label="Dicionário" cls="w-[79px]" active />
                    <BTab icon="tree" label="Árvore de relatório" cls="w-[122px]" />
                  </div>
                </div>
              </div>
              {/* messages bar */}
              <div className="flex-1 flex items-end pl-[1px] bg-gradient-to-b from-[#e4f0ff] to-[#a9cdfb] border-b border-[#5b87bd]">
                <div className="-mt-[2px] w-[88px] h-[27px] rounded-t-[4px] border border-b-0 border-[#6f9bd6] bg-gradient-to-b from-[#e4f0ff] to-[#c0d9fc] flex items-center pl-[2px] gap-[3px] text-[11.500px] text-[#15428b] self-start">
                  {ic.msg}Mensagens
                </div>
              </div>
            </div>
          </div>

          {/* status */}
          <div className="h-[27px] shrink-0 flex items-center pl-[4px] bg-[linear-gradient(180deg,#cfe0f6_0,#c8dcf6_34%,#b1cff5_36%,#cfe0f6_100%)] text-[12px] text-[#2c5aa0]">
            <Grip className="mr-[11px]" />
            <span className="text-[#15428b] w-[66px]">Centímetros</span>
            <div className="ml-[8px] w-0 h-0 border-x-[3.500px] border-x-transparent border-b-[4px] border-b-[#222]" />
            <Sep className="ml-[5px] mr-[4px]" />
            <span className="w-[49px]">Relatório</span>
            <Sep className="ml-[6px] mr-[4px]" />
            <span>X:18,78 &nbsp;Y:2,15</span>
          </div>
        </div>
      </div>

      {/* context menu */}
      <div className="absolute left-[810px] top-[193px] w-[194px] border border-[#979797] bg-[#fafafa] rounded-[2px] shadow-[2px_2px_3px_rgba(0,0,0,0.45)]">
        <MItem icon="mConn">Nova Conexão...</MItem>
        <MSep />
        <MItem icon="mFonte" hi>Nova Fonte de dados...</MItem>
        <MItem icon="mRel">Novo Relacionamento...</MItem>
        <MSep />
        <MItem icon="mCat">Nova Categoria...</MItem>
        <MItem icon="mVar">Nova Variavel...</MItem>
        <MSep />
        <MItem icon="pencil">Editar</MItem>
        <MItem icon="redX"><span className="underline">E</span>xcluir</MItem>
        <MSep />
        <MItem icon="mExp">Expandir Tudo</MItem>
        <MItem icon="mCol">Recolher Tudo</MItem>
      </div>
    </div>
  );
}
